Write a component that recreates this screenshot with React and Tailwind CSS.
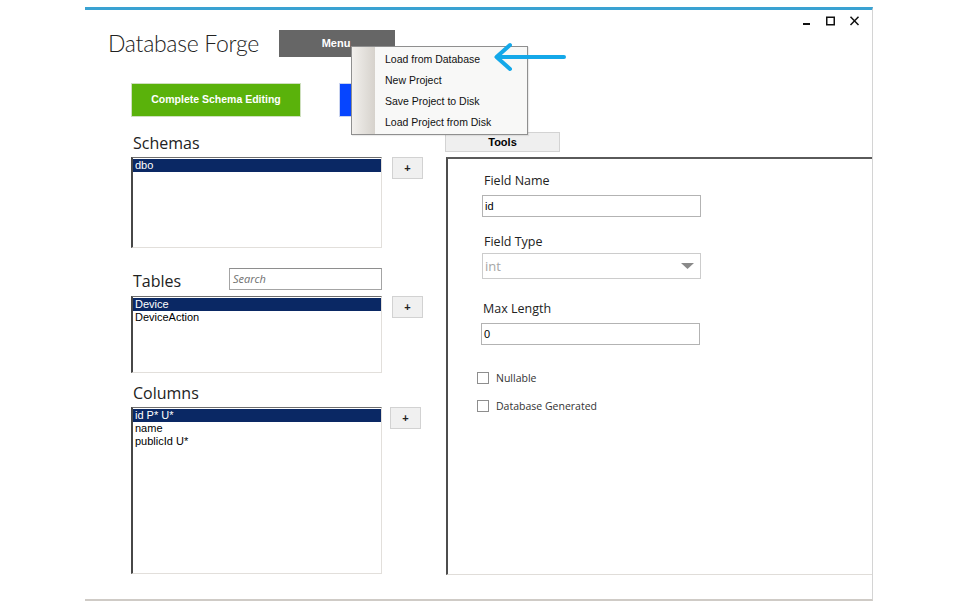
import React from "react";

const sans = { fontFamily: "'Liberation Sans', Arial, sans-serif" };

function ListBox({ h, items, selected = 0 }) {
  return (
    <div
      className={`w-[251px] ${h} bg-white border-t border-l-2 border-r border-b border-t-[#6e6e6e] border-l-[#474747] border-r-[#e2dfdb] border-b-[#e2dfdb] pt-px font-['Liberation_Sans',Arial,sans-serif] text-[11px] leading-[13px] text-black`}
    >
      {items.map((it, i) => (
        <div
          key={it}
          className={`h-[13px] pl-[2px] ${i === selected ? "bg-[#0a2864] text-white" : ""}`}
        >
          {it}
        </div>
      ))}
    </div>
  );
}

function PlusButton({ ml = "ml-[10px]" }) {
  return (
    <div
      className={`${ml} w-[31px] h-[22px] bg-[#f0f0f0] border border-[#d2d2d2] flex items-center justify-center text-[11px] font-bold text-[#222] font-['Liberation_Sans',Arial,sans-serif]`}
    >
      +
    </div>
  );
}

function Checkbox({ label, mt }) {
  return (
    <div className={`flex items-center ${mt} h-[12px]`}>
      <div className="w-[12px] h-[12px] bg-white border border-[#8e8e8e]" />
      <span className="ml-[7px] text-[10.5px] text-[#333] font-['Open_Sans',sans-serif] leading-[12px]">
        {label}
      </span>
    </div>
  );
}

export default function App() {
  return (
    <div className="w-[960px] h-[610px] bg-white overflow-hidden">
      <div className="relative ml-[85px] mt-[7px] w-[788px] h-[594px] border-t-[3px] border-t-[#3aa2d2] border-r border-r-[#d4d4d4] border-b-2 border-b-[#cfcbc6]">
        {/* top row */}
        <div className="flex items-start h-[47px]">
          <div className="ml-[23px] w-[171px] pt-[18px] text-[23px] leading-[30px] tracking-[-0.3px] font-light text-[#222] font-['Lato',sans-serif] whitespace-nowrap">
            Database Forge
          </div>
          <div className="mt-[20px] w-[116px] h-[27px] bg-[#666666] flex items-center justify-center">
            <span className="text-[11px] font-bold text-white font-['Liberation_Sans',Arial,sans-serif] -ml-[2px]">
              Menu
            </span>
          </div>
          <div className="ml-auto mr-[12px] mt-[6px]">
            <svg width="58" height="10" viewBox="0 0 58 10">
              <rect x="1" y="7" width="7" height="2" fill="#111" />
              <rect x="24.75" y="1.25" width="7.5" height="7.5" fill="none" stroke="#111" strokeWidth="1.5" />
              <path d="M48.5 0.8 L56.5 9 M56.5 0.8 L48.5 9" stroke="#111" strokeWidth="1.5" fill="none" />
            </svg>
          </div>
        </div>

        {/* buttons row */}
        <div className="flex mt-[26px]">
          <div className="ml-[46px] w-[170px] h-[34px] bg-[#5ab20b] border border-[#cfe0bf] flex items-center justify-center">
            <span className="text-[10.5px] font-bold text-white font-['Liberation_Sans',Arial,sans-serif]">
              Complete Schema Editing
            </span>
          </div>
          <div className="ml-[38px] w-[170px] h-[34px] bg-[#0645ff] border border-[#c9d3ef]" />
        </div>

        {/* body */}
        <div className="flex mt-[15px]">
          {/* left column */}
          <div className="ml-[46px] w-[292px]">
            <div className="h-[25px] pt-[3px] pl-[2px] text-[16px] leading-[16px] text-[#222] font-['Open_Sans',sans-serif]">
              Schemas
            </div>
            <div className="flex items-start">
              <ListBox h="h-[91px]" items={["dbo"]} />
              <PlusButton />
            </div>
            <div className="flex items-start h-[48px]">
              <div className="mt-[25px] pl-[2px] w-[98px] text-[16px] leading-[16px] text-[#222] font-['Open_Sans',sans-serif]">
                Tables
              </div>
              <div className="mt-[20px] w-[153px] h-[22px] bg-white border border-[#a4a4a4] border-t-[#8e8e8e] flex items-center pl-[3px]">
                <span className="italic text-[11px] text-[#6f6f6f] font-['Open_Sans',sans-serif]">Search</span>
              </div>
            </div>
            <div className="flex items-start">
              <ListBox h="h-[77px]" items={["Device", "DeviceAction"]} />
              <PlusButton />
            </div>
            <div className="h-[34px] pt-[12px] pl-[2px] text-[16px] leading-[16px] text-[#222] font-['Open_Sans',sans-serif]">
              Columns
            </div>
            <div className="flex items-start">
              <ListBox h="h-[167px]" items={["id P* U*", "name", "publicId U*"]} />
              <PlusButton ml="ml-[8px]" />
            </div>
          </div>

          {/* right column */}
          <div className="ml-[22px] flex-1 flex flex-col">
            <div className="w-[115px] h-[20px] bg-[#efefef] border border-[#d3d3d3] flex items-center justify-center">
              <span className="text-[11px] font-bold text-black font-['Liberation_Sans',Arial,sans-serif] mt-px">Tools</span>
            </div>
            <div className="mt-[5px] ml-px h-[418px] bg-white border-t-2 border-l-2 border-b border-t-[#5a5a5a] border-l-[#4e4e4e] border-b-[#e0ddd9] pl-[29px] font-['Open_Sans',sans-serif]">
              <div className="mt-[14px] ml-[7px] h-[16px] text-[12.5px] leading-[16px] text-[#222]">Field Name</div>
              <div className="mt-[6px] ml-[5px] w-[219px] h-[22px] border border-[#b3b3b3] flex items-center pl-[2px] text-[11px] text-black" style={sans}>
                id
              </div>
              <div className="mt-[17px] ml-[7px] h-[16px] text-[12.5px] leading-[16px] text-[#222]">Field Type</div>
              <div className="mt-[3px] ml-[5px] w-[219px] h-[26px] border border-[#cccccc] bg-white flex items-center justify-between pl-[2px] pr-[6px]">
                <span className="text-[13px] text-[#a6a6a6] mt-px">int</span>
                <svg width="13" height="6" viewBox="0 0 13 6">
                  <path d="M0 0 L13 0 L6.5 6 Z" fill="#8a8a8a" />
                </svg>
              </div>
              <div className="mt-[22px] ml-[6px] h-[16px] text-[12.5px] leading-[16px] text-[#222]">Max Length</div>
              <div className="mt-[6px] ml-[4px] w-[219px] h-[22px] border border-[#b3b3b3] flex items-center pl-[2px] text-[11px] text-black" style={sans}>
                0
              </div>
              <Checkbox label="Nullable" mt="mt-[27px]" />
              <Checkbox label="Database Generated" mt="mt-[16px]" />
            </div>
          </div>
        </div>

        {/* dropdown menu overlay */}
        <div className="absolute left-[266px] top-[36px] w-[177px] h-[89px] bg-[#f8f8f7] border border-[#8f8f8f] flex shadow-[1px_1px_1px_rgba(0,0,0,0.08)]">
          <div className="w-[23px] h-full bg-linear-to-r from-[#f2f0ed] to-[#d6d2cc]" />
          <div className="pt-[2px] pl-[10px] font-['Liberation_Sans',Arial,sans-serif] text-[10.5px] text-[#111]">
            {["Load from Database", "New Project", "Save Project to Disk", "Load Project from Disk"].map((t) => (
              <div key={t} className="h-[21px] leading-[21px] whitespace-nowrap">
                {t}
              </div>
            ))}
          </div>
        </div>

        {/* arrow annotation */}
        <svg className="absolute left-[407px] top-[32px]" width="76" height="32" viewBox="0 0 76 32">
          <path d="M72 15 L5 15 M18 3 L4.5 15 L18 27" stroke="#14a8e9" strokeWidth="4" strokeLinecap="round" strokeLinejoin="round" fill="none" />
        </svg>
      </div>
    </div>
  );
}
